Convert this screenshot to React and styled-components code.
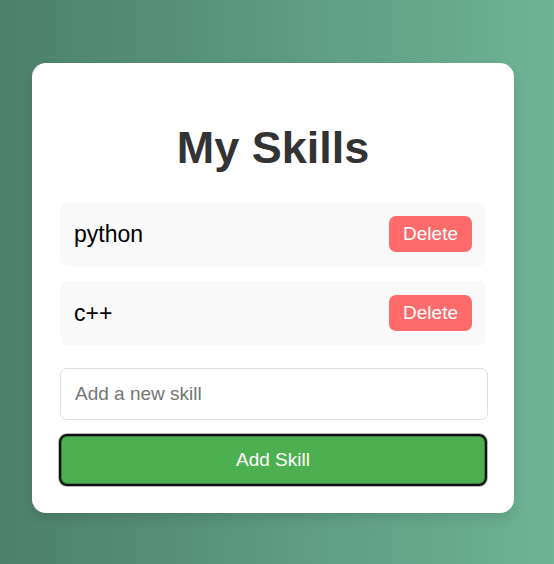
import React, { useState } from "react";
import styled, { createGlobalStyle } from "styled-components";

const GlobalStyle = createGlobalStyle`
  *, *::before, *::after { box-sizing: border-box; }
  body {
    margin: 0;
    font-family: "Liberation Sans", Arial, sans-serif;
    color: #000;
  }
`;

const Page = styled.main`
  min-height: 100vh;
  display: flex;
  align-items: center;
  justify-content: center;
  padding: 32px 40px 20px 32px;
  background: linear-gradient(to right, #4b806c, #6fb396);
`;

const Card = styled.section`
  width: 100%;
  max-width: 560px;
  padding: 28px;
  border-radius: 14px;
  background: #fff;
  box-shadow: 0 6px 12px rgba(0, 0, 0, 0.1);
`;

const Title = styled.h1`
  margin: 30px 0 28px;
  font-size: 45px;
  line-height: 53px;
  text-align: center;
  color: #333;
`;

const SkillList = styled.ul`
  list-style: none;
  margin: 0 0 23px;
  padding: 0;
  display: flex;
  flex-direction: column;
  gap: 15px;
`;

const SkillItem = styled.li`
  display: flex;
  align-items: center;
  justify-content: space-between;
  padding: 14px;
  border-radius: 7px;
  background: #f9f9f9;
  font-size: 23px;
`;

const Button = styled.button`
  border: 0;
  border-radius: 7px;
  font-family: inherit;
  font-size: 19px;
  color: #fff;
  cursor: pointer;
`;

const DeleteButton = styled(Button)`
  height: 36px;
  padding: 0 14px;
  background: #ff6b6b;
`;

const SkillForm = styled.form`
  display: flex;
  flex-direction: column;
  gap: 15px;
`;

const SkillInput = styled.input`
  width: calc(100% + 2px);
  height: 52px;
  padding: 0 14px;
  border: 1px solid #ddd;
  border-radius: 7px;
  font-family: inherit;
  font-size: 19px;
  &::placeholder { color: #757575; }
`;

const AddButton = styled(Button)`
  height: 50px;
  background: #4caf50;
  outline: 2px solid #101010;
  outline-offset: -1px;
  box-shadow: 0 0 0 2px rgba(16, 16, 16, 0.3), inset 0 0 0 2px rgba(16, 16, 16, 0.3);
`;

export default function App() {
  const [skills, setSkills] = useState(["python", "c++"]);
  const [draft, setDraft] = useState("");

  const addSkill = (event) => {
    event.preventDefault();
    const name = draft.trim();
    if (!name) return;
    setSkills([...skills, name]);
    setDraft("");
  };

  return (
    <>
      <GlobalStyle />
      <Page>
        <Card>
          <Title>My Skills</Title>
          <SkillList>
            {skills.map((skill, index) => (
              <SkillItem key={index}>
                <span>{skill}</span>
                <DeleteButton
                  type="button"
                  onClick={() => setSkills(skills.filter((_, i) => i !== index))}
                >
                  Delete
                </DeleteButton>
              </SkillItem>
            ))}
          </SkillList>
          <SkillForm onSubmit={addSkill}>
            <SkillInput
              aria-label="Add a new skill"
              placeholder="Add a new skill"
              value={draft}
              onChange={(event) => setDraft(event.target.value)}
            />
            <AddButton type="submit">Add Skill</AddButton>
          </SkillForm>
        </Card>
      </Page>
    </>
  );
}
